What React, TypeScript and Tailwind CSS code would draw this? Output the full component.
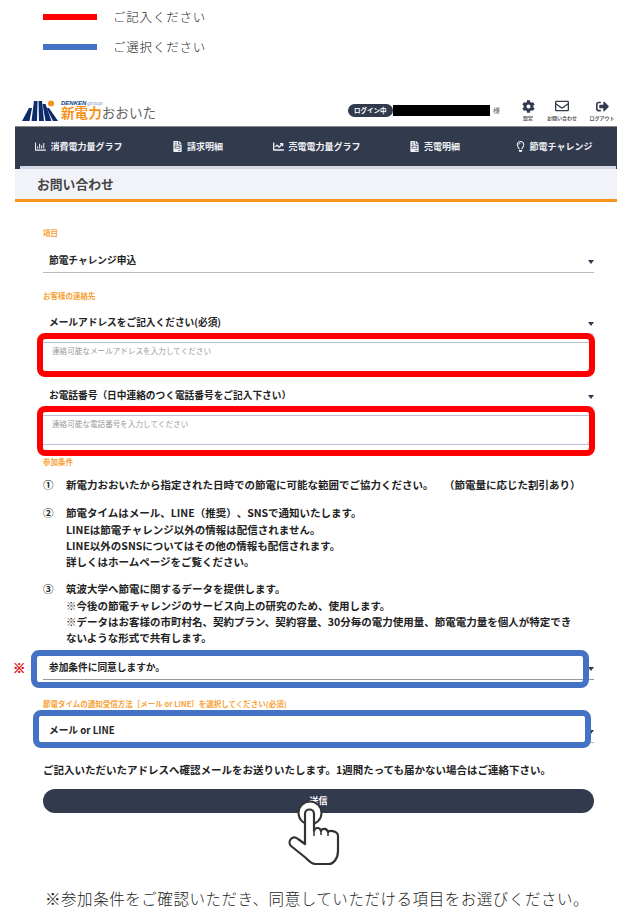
import { FaCog, FaRegEnvelope, FaSignOutAlt, FaRegChartBar, FaFileInvoice, FaChartLine, FaRegLightbulb } from "react-icons/fa";

const font = "font-['Noto_Sans_CJK_JP',sans-serif] [text-spacing-trim:space-all]";

function Legend({ color, text }: { color: string; text: string }) {
  return (
    <div className="flex h-[30px] items-center pl-[43px]">
      <div className={`h-[6px] w-[54px] ${color}`} />
      <span className="ml-[16px] text-[12.5px] font-light tracking-[0.8px] text-[#222]">{text}</span>
    </div>
  );
}

function Logo() {
  return (
    <div className="flex h-[26px] items-start pl-[7px]">
      <svg width="36" height="22" viewBox="0 0 36 22" className="mt-[2px] shrink-0">
        <g fill="#0d2a6b">
          <path d="M0 21 L7 8 L10 8 L7.5 21 Z" />
          <path d="M9.5 21 L12 1 L15.5 1 L15 21 Z" />
          <path d="M17 21 L16.5 1 L20 1 L22 21 Z" />
          <path d="M23.5 21 L20.5 4 L23.5 4 L29.5 21 Z" />
          <path d="M31 21 L24.5 8 L27 8 L36 21 Z" />
        </g>
        <circle cx="29" cy="3.5" r="3" fill="#f7941d" />
      </svg>
      <div className="ml-[3px] mt-[0.5px] flex flex-col font-['Liberation_Sans','Noto_Sans_CJK_JP',sans-serif]">
        <div className="flex h-[8px] items-center text-[6px] leading-none">
          <span className="font-black italic text-[#0d3a80]">DENKEN</span>
          <span className="ml-[1px] italic text-[#7f9cc7]">group</span>
        </div>
        <div className="flex h-[14px] items-center whitespace-nowrap text-[13.6px] leading-none">
          <span className="font-bold text-[#f7941d]">新電力</span>
          <span className="text-[#666]">おおいた</span>
        </div>
      </div>
    </div>
  );
}

function TopIcon({ icon, label, width }: { icon: React.ReactNode; label: string; width: string }) {
  return (
    <div className={`flex flex-col items-center ${width}`}>
      <div className="flex h-[16px] items-center text-[#323a4e]">{icon}</div>
      <span className="mt-[1px] whitespace-nowrap text-[5px] font-bold leading-none text-[#555]">{label}</span>
    </div>
  );
}

function NavItem({ icon, label, width }: { icon: React.ReactNode; label: string; width: string }) {
  return (
    <div className={`flex items-center justify-center gap-[4px] text-[#f0f1f5] ${width}`}>
      <span className="text-[11px]">{icon}</span>
      <span className="whitespace-nowrap text-[9px] font-bold">{label}</span>
    </div>
  );
}

function Label({ children, className = "" }: { children: React.ReactNode; className?: string }) {
  return <div className={`flex items-center whitespace-nowrap text-[7.5px] font-bold leading-none text-[#f7a236] ${className}`}>{children}</div>;
}

function SelectRow({ text, className = "", line = "bg-[#bbb]" }: { text: string; className?: string; line?: string }) {
  return (
    <div className={`relative flex flex-col justify-end ${className}`}>
      <div className="flex items-center justify-between pl-[6px]">
        <span className="whitespace-nowrap text-[9.7px] font-bold leading-[16px] text-[#222]">{text}</span>
        <span className="mt-[4px] h-0 w-0 border-x-[3px] border-t-[4px] border-x-transparent border-t-[#323a4e]" />
      </div>
      <div className={`mt-[4px] h-[1px] w-full ${line}`} />
    </div>
  );
}

function Area({ placeholder }: { placeholder: string }) {
  return (
    <div className="relative h-[30px] border-y border-[#bfc0d4] bg-white pl-[9px] pt-[3px]">
      <span className="block whitespace-nowrap text-[7.6px] leading-[10px] text-[#999]">{placeholder}</span>
      <svg width="5" height="5" viewBox="0 0 5 5" className="absolute bottom-[0px] right-[2px]">
        <path d="M0 5 L5 0 M3 5 L5 3" stroke="#aaa" strokeWidth="0.7" />
      </svg>
    </div>
  );
}

function Term({ num, lines, className = "" }: { num: string; lines: string[]; className?: string }) {
  return (
    <div className={`flex ${className}`}>
      <span className="w-[23px] shrink-0 text-[10.5px] font-bold leading-[16.3px] text-[#222]">{num}</span>
      <div className="flex flex-col">
        {lines.map((l) => (
          <span key={l} className="whitespace-nowrap text-[10.5px] font-bold leading-[16.3px] text-[#222]">{l}</span>
        ))}
      </div>
    </div>
  );
}

function Frame({ className }: { className: string }) {
  return <div className={`pointer-events-none absolute border-[6px] ${className}`} />;
}

function Hand() {
  return (
    <svg width="54" height="67" viewBox="0 0 54 67" className="pointer-events-none absolute left-[287px] top-[799px]">
      <circle cx="23" cy="14" r="11.5" fill="#fff" stroke="#333" strokeWidth="2" />
      <path
        d="M18 15 C18 9 27 9 27 15 L27 32 C28 28 33 28 34 32 C35 29 40 29 41 33 C43 31 51 32 51 37 L51 52 C51 60 46 65 42 65 L28 65 C24 65 22 62 19 59 L4 47 C0 43 5 35 11 40 L18 45 Z"
        fill="#fff"
        stroke="#333"
        strokeWidth="2.2"
        strokeLinejoin="round"
      />
      <path d="M27 32 L27 37 M34 32 L34 36 M41 33 L41 37" stroke="#333" strokeWidth="1.5" />
    </svg>
  );
}

export default function App() {
  return (
    <div className={`relative h-[913px] w-[631px] overflow-hidden bg-white ${font}`}>
      <div className="h-[2px]" />
      <Legend color="bg-[#ff0000]" text="ご記入ください" />
      <Legend color="bg-[#4472c4]" text="ご選択ください" />

      <div className="ml-[15px] mt-[36px] w-[602px]">
        <div className="flex h-[28px] items-start justify-between">
          <Logo />
          <div className="flex items-start pr-[1px]">
            <div className="mt-[6px] flex h-[13px] items-center">
              <span className="rounded-full bg-[#323a4e] px-[6px] text-[6.5px] font-bold leading-[13px] text-white">ログイン中</span>
              <div className="ml-[0.5px] h-[11px] w-[97px] bg-black" />
              <span className="ml-[3px] text-[7px] text-[#666]">様</span>
            </div>
            <div className="ml-[17px] flex">
              <TopIcon icon={<FaCog size={13} />} label="設定" width="w-[22px]" />
              <TopIcon icon={<FaRegEnvelope size={14} />} label="お問い合わせ" width="ml-[7px] w-[32px]" />
              <TopIcon icon={<FaSignOutAlt size={13} />} label="ログアウト" width="ml-[10px] w-[28px]" />
            </div>
          </div>
        </div>

        <nav className="flex h-[40px] items-center border-t border-[#888] bg-[#323a4e] pl-[5px]">
          <NavItem icon={<FaRegChartBar />} label="消費電力量グラフ" width="w-[118px]" />
          <NavItem icon={<FaFileInvoice />} label="請求明細" width="w-[119px]" />
          <NavItem icon={<FaChartLine />} label="売電電力量グラフ" width="w-[120px]" />
          <NavItem icon={<FaFileInvoice />} label="売電明細" width="w-[115px]" />
          <NavItem icon={<FaRegLightbulb />} label="節電チャレンジ" width="w-[123px]" />
        </nav>
        <div className="h-[3px] border-l-[5px] border-r-[1px] border-[#323a4e] bg-[#d5d8e6]" />
        <div className="flex h-[30px] items-center bg-[#f2f3f8] pl-[22px]">
          <h1 className="text-[12.8px] font-bold text-[#444]">お問い合わせ</h1>
        </div>
        <div className="h-[3px] bg-[#f7941d]" />
      </div>

      <main className="ml-[43px] w-[551px]">
        <Label className="mt-[27px] h-[8px]">項目</Label>
        <SelectRow text="節電チャレンジ申込" className="mt-[15px]" />

        <Label className="mt-[19px] h-[8px]">お客様の連絡先</Label>
        <SelectRow text="メールアドレスをご記入ください(必須)" className="mt-[14px]" line="bg-[#ccc]" />
        <div className="mt-[7px]">
          <Area placeholder="連絡可能なメールアドレスを入力してください" />
        </div>
        <SelectRow text="お電話番号（日中連絡のつく電話番号をご記入下さい）" className="mt-[15px]" line="bg-[#ccc]" />
        <div className="mt-[7px]">
          <Area placeholder="連絡可能な電話番号を入力してください" />
        </div>

        <Label className="mt-[13px] h-[8px]">参加条件</Label>
        <Term
          className="mt-[11px]"
          num="①"
          lines={["新電力おおいたから指定された日時での節電に可能な範囲でご協力ください。　（節電量に応じた割引あり）"]}
        />
        <Term
          className="mt-[12px]"
          num="②"
          lines={[
            "節電タイムはメール、LINE（推奨）、SNSで通知いたします。",
            "LINEは節電チャレンジ以外の情報は配信されません。",
            "LINE以外のSNSについてはその他の情報も配信されます。",
            "詳しくはホームページをご覧ください。",
          ]}
        />
        <Term
          className="mt-[11px]"
          num="③"
          lines={[
            "筑波大学へ節電に関するデータを提供します。",
            "※今後の節電チャレンジのサービス向上の研究のため、使用します。",
            "※データはお客様の市町村名、契約プラン、契約容量、30分毎の電力使用量、節電電力量を個人が特定でき",
            "ないような形式で共有します。",
          ]}
        />

        <SelectRow text="参加条件に同意しますか。" className="mt-[12.5px]" line="bg-[#999]" />
        <Label className="mt-[19.5px] h-[8px]">節電タイムの通知受信方法［メール or LINE］を選択してください(必須)</Label>
        <SelectRow text="メール or LINE" className="mt-[14px]" />

        <p className="mt-[19px] whitespace-nowrap text-[10.5px] font-bold leading-[16px] text-[#222]">
          ご記入いただいたアドレスへ確認メールをお送りいたします。1週間たっても届かない場合はご連絡下さい。
        </p>
        <button className="mt-[11px] flex h-[24px] w-[551px] items-center justify-center rounded-full bg-[#323a4e] text-[9px] font-bold text-white">
          送信
        </button>
      </main>

      <p className="absolute left-[45px] top-[885px] whitespace-nowrap text-[15.5px] font-light leading-[26px] tracking-[0.55px] text-[#222]">
        ※参加条件をご確認いただき、同意していただける項目をお選びください。
      </p>

      <Frame className="left-[37px] top-[333px] h-[44px] w-[558px] rounded-[8px] border-[#ff0000]" />
      <Frame className="left-[37px] top-[406px] h-[50px] w-[558px] rounded-[8px] border-[#ff0000]" />
      <Frame className="left-[31px] top-[650px] h-[38px] w-[558px] rounded-[8px] border-[#4472c4]" />
      <Frame className="left-[33px] top-[710px] h-[38px] w-[558px] rounded-[8px] border-[#4472c4]" />
      <span className="absolute left-[13px] top-[660px] text-[12.5px] font-black leading-[16px] text-[#e00000] [-webkit-text-stroke:0.4px_#e00000]">※</span>
      <Hand />
    </div>
  );
}
